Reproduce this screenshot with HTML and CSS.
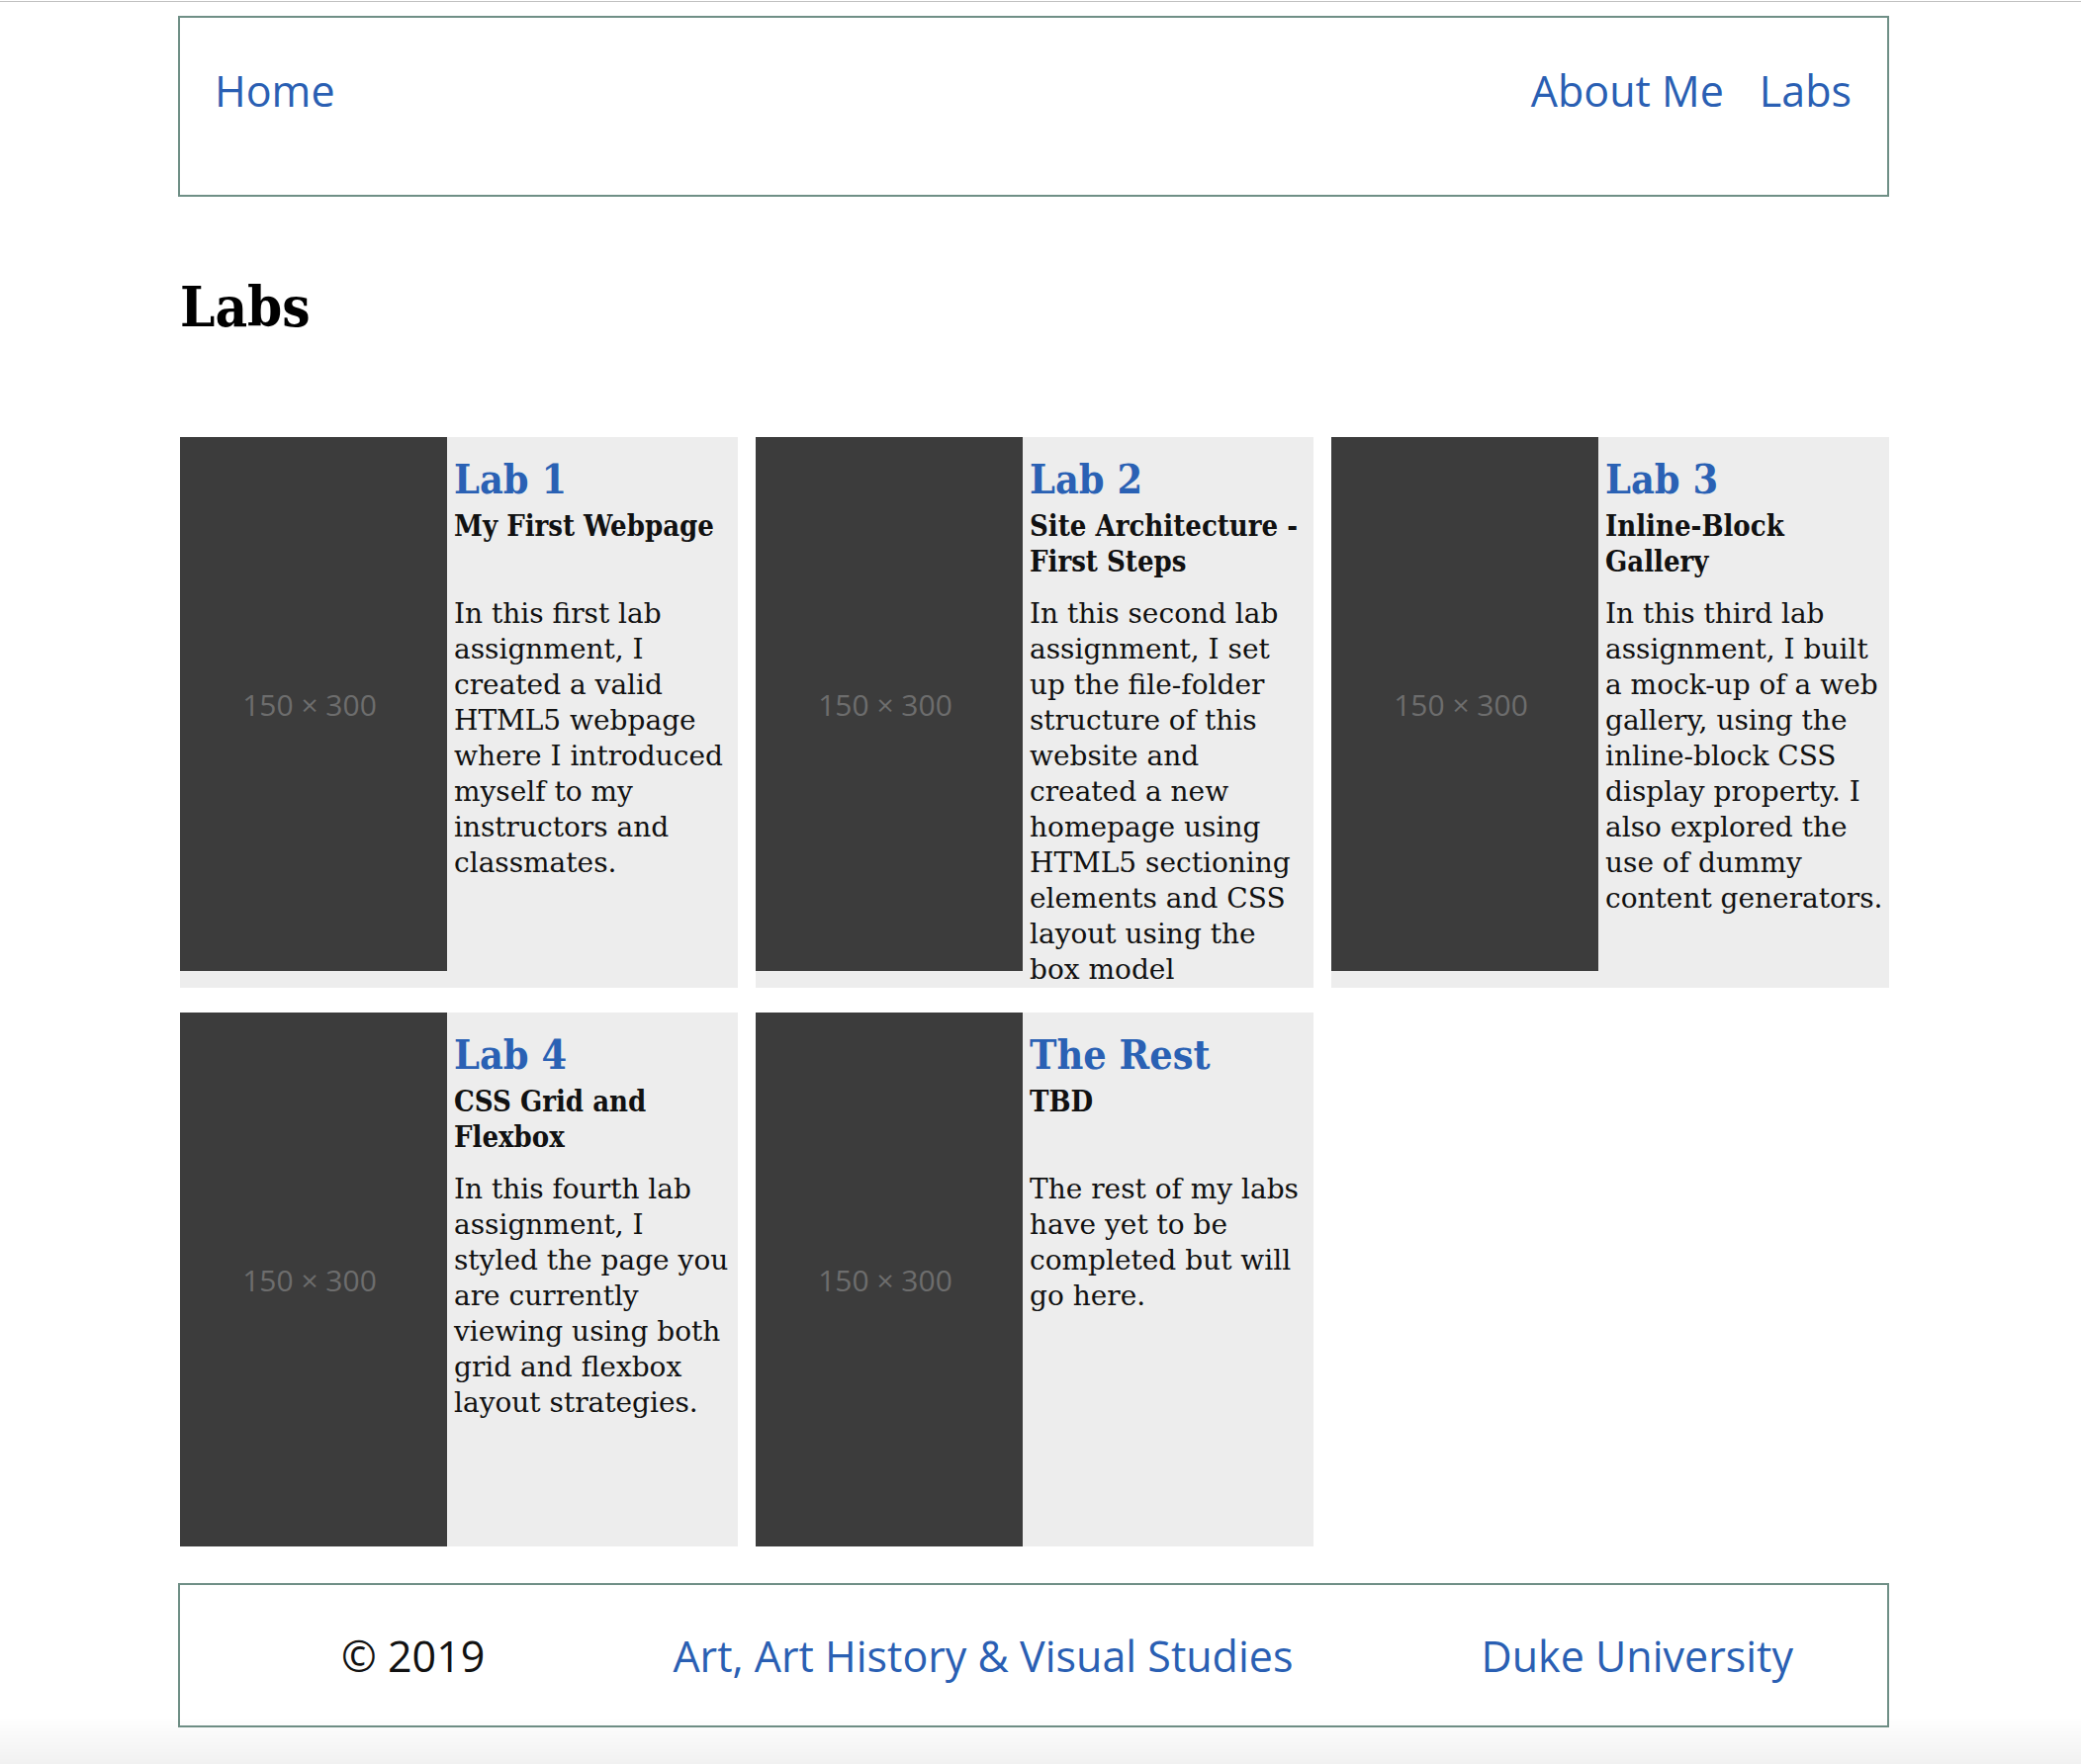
FILE: index.html
```html
<!DOCTYPE html>
<html lang="en">
<head>
<meta charset="utf-8">
<title>Labs</title>
<link rel="stylesheet" href="styles.css">
</head>
<body>
<div class="page">
  <header class="site-header">
    <nav class="nav">
      <a class="nav-link" href="#">Home</a>
      <ul class="nav-right">
        <li><a class="nav-link" href="#">About Me</a></li>
        <li><a class="nav-link" href="#">Labs</a></li>
      </ul>
    </nav>
  </header>

  <main class="main">
    <h1 class="page-title">Labs</h1>
    <section class="labs">
      <article class="lab">
        <div class="thumb">150 × 300</div>
        <div class="lab-body">
          <h2 class="lab-title">Lab 1</h2>
          <h3 class="lab-sub">My First Webpage</h3>
          <p class="lab-text">In this first lab assignment, I created a valid HTML5 webpage where I introduced myself to my instructors and classmates.</p>
        </div>
      </article>
      <article class="lab">
        <div class="thumb">150 × 300</div>
        <div class="lab-body">
          <h2 class="lab-title">Lab 2</h2>
          <h3 class="lab-sub">Site Architecture - First Steps</h3>
          <p class="lab-text">In this second lab assignment, I set up the file-folder structure of this website and created a new homepage using HTML5 sectioning elements and CSS layout using the box model</p>
        </div>
      </article>
      <article class="lab">
        <div class="thumb">150 × 300</div>
        <div class="lab-body">
          <h2 class="lab-title">Lab 3</h2>
          <h3 class="lab-sub">Inline-Block Gallery</h3>
          <p class="lab-text">In this third lab assignment, I built a mock-up of a web gallery, using the inline-block CSS display property. I also explored the use of dummy content generators.</p>
        </div>
      </article>
      <article class="lab">
        <div class="thumb">150 × 300</div>
        <div class="lab-body">
          <h2 class="lab-title">Lab 4</h2>
          <h3 class="lab-sub">CSS Grid and Flexbox</h3>
          <p class="lab-text">In this fourth lab assignment, I styled the page you are currently viewing using both grid and flexbox layout strategies.</p>
        </div>
      </article>
      <article class="lab">
        <div class="thumb">150 × 300</div>
        <div class="lab-body">
          <h2 class="lab-title">The Rest</h2>
          <h3 class="lab-sub">TBD</h3>
          <p class="lab-text">The rest of my labs have yet to be completed but will go here.</p>
        </div>
      </article>
    </section>
  </main>

  <footer class="site-footer">
    <span class="copy">© 2019</span>
    <a class="foot-link" href="#">Art, Art History &amp; Visual Studies</a>
    <a class="foot-link" href="#">Duke University</a>
  </footer>
</div>
</body>
</html>
```

FILE: styles.css
```css
html {
  background: #ffffff;
}

body {
  margin: 1px 0 0 0;
  border-top: 1px solid #c0c0c0;
  font-family: "Open Sans", "DejaVu Sans", sans-serif;
  color: #111111;
}

body::after {
  content: "";
  position: fixed;
  left: 0;
  right: 0;
  bottom: 0;
  height: 48px;
  background: linear-gradient(to bottom, rgba(0, 0, 0, 0), rgba(0, 0, 0, 0.055));
  pointer-events: none;
}

.page {
  width: 1730px;
  margin-left: 180px;
}

/* Header */
.site-header {
  margin-top: 14px;
  border: 2px solid #6f8f86;
  height: 183px;
  box-sizing: border-box;
  padding: 44px 36px 0 35px;
}

.nav {
  display: flex;
  justify-content: space-between;
  align-items: baseline;
}

.nav-right {
  display: flex;
  gap: 36px;
  list-style: none;
  margin: 0;
  padding: 0;
}

.nav-link {
  font-family: "Open Sans", sans-serif;
  font-size: 43px;
  color: #2a5fb3;
  text-decoration: none;
}

/* Title */
.main {
  padding-left: 2px;
}

.page-title {
  font-family: "DejaVu Serif", serif;
  font-stretch: condensed;
  font-weight: bold;
  font-size: 56px;
  line-height: 74px;
  margin: 74px 0 95px 0;
  color: #000;
}

/* Labs grid */
.labs {
  display: grid;
  grid-template-columns: repeat(3, 564px);
  column-gap: 18px;
  row-gap: 25px;
}

.lab {
  display: grid;
  grid-template-columns: 270px 1fr;
  align-items: start;
  background: #ededed;
}

.thumb {
  width: 270px;
  height: 540px;
  background: #3c3c3c;
  color: #6d6d6d;
  font-family: "Open Sans", sans-serif;
  font-size: 30px;
  display: flex;
  align-items: center;
  justify-content: center;
  padding-right: 8px;
  box-sizing: border-box;
}

.lab-body {
  padding: 19px 4px 0 7px;
  font-family: "DejaVu Serif", serif;
  color: #111;
}

.lab-title {
  margin: 0;
  font-family: "DejaVu Serif", serif;
  font-stretch: condensed;
  font-weight: bold;
  font-size: 41px;
  line-height: 48px;
  color: #2a61b4;
}

.lab-sub {
  margin: 5px 0 0 0;
  min-height: 72px;
  font-family: "DejaVu Serif", serif;
  font-stretch: condensed;
  font-weight: bold;
  font-size: 29px;
  line-height: 36px;
}

.lab-text {
  margin: 17px 0 0 0;
  font-size: 28px;
  line-height: 36px;
}

/* Footer */
.site-footer {
  margin-top: 37px;
  border: 2px solid #6f8f86;
  height: 146px;
  box-sizing: border-box;
  padding: 42px 0 0 68px;
  display: flex;
  justify-content: space-around;
  align-items: baseline;
  font-family: "Open Sans", sans-serif;
  font-size: 43px;
}

.copy {
  color: #111;
}

.foot-link {
  color: #2a5fb3;
  text-decoration: none;
}
```
